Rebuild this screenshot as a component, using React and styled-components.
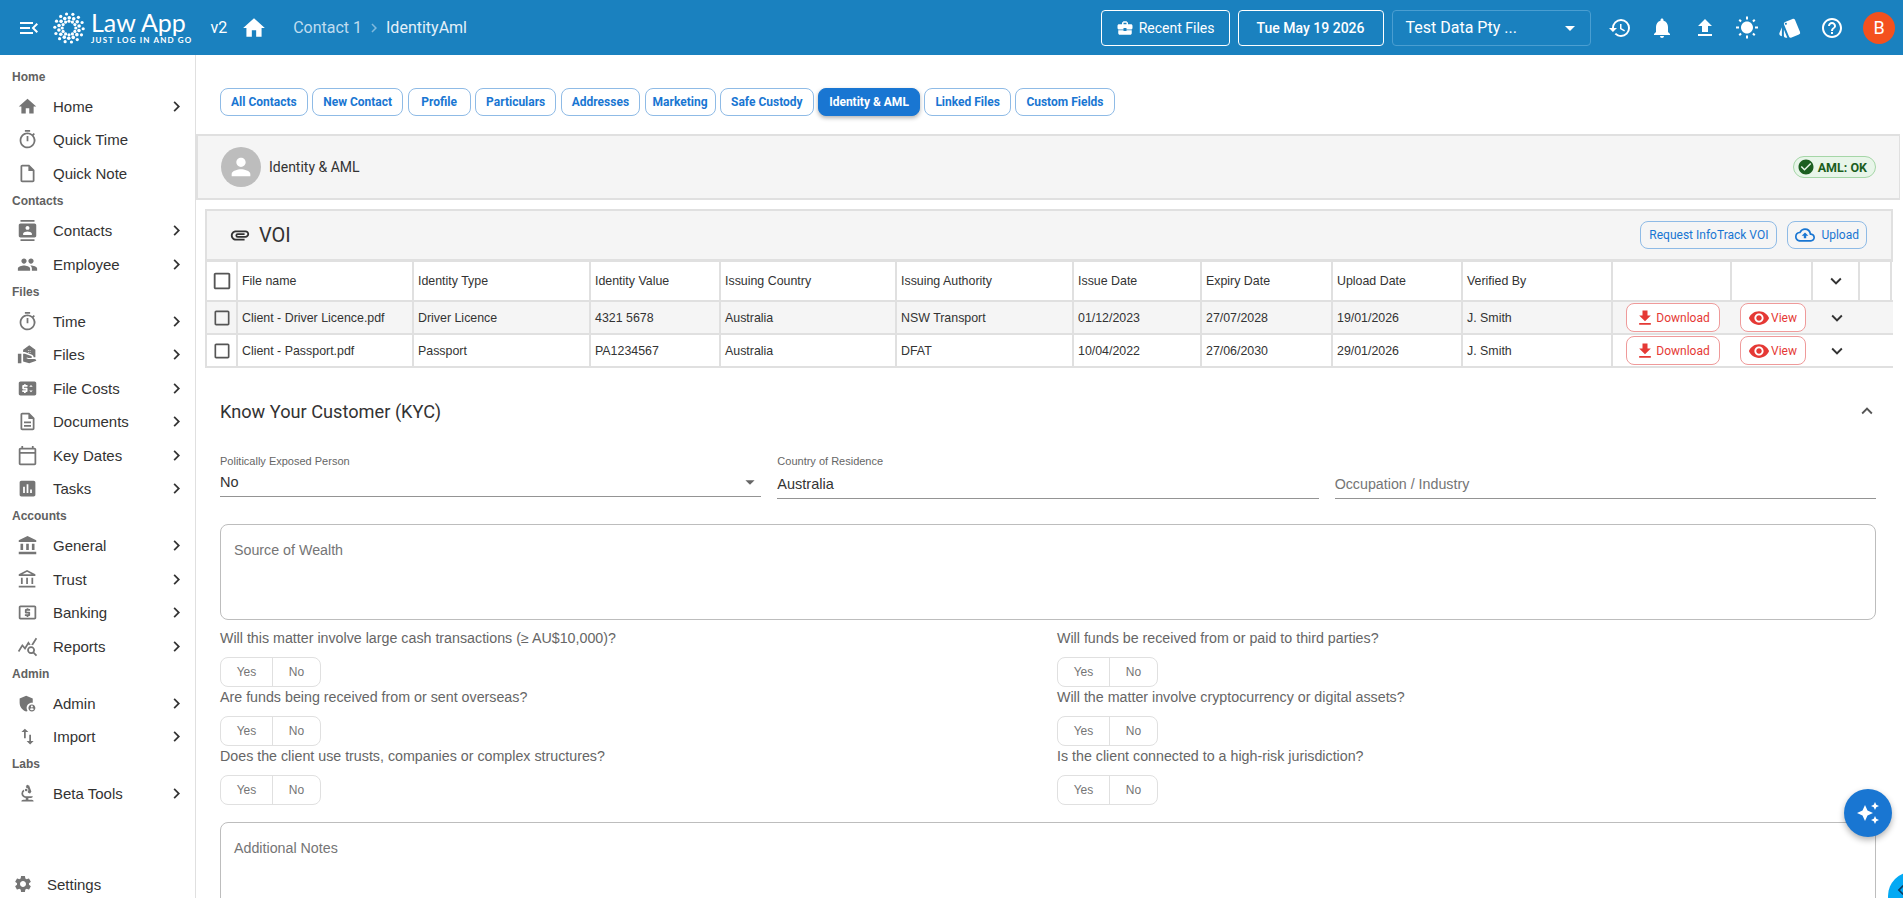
import styled, { createGlobalStyle } from 'styled-components';
import {
    MdMenuOpen, MdHome, MdOutlineTimer, MdOutlineInsertDriveFile, MdContacts, MdPeople,
    MdRealEstateAgent, MdPriceChange, MdOutlineDescription, MdOutlineCalendarToday, MdAssessment,
    MdAccountBalance, MdOutlineAccountBalance, MdOutlineLocalAtm, MdOutlineQueryStats,
    MdAdminPanelSettings, MdImportExport, MdBiotech, MdSettings, MdChevronRight, MdBusinessCenter,
    MdArrowDropDown, MdHistory, MdNotifications, MdFileUpload, MdWbSunny, MdStyle, MdHelpOutline,
    MdPerson, MdCheckCircle, MdAttachment, MdOutlineCloudUpload, MdCheckBoxOutlineBlank,
    MdFileDownload, MdVisibility, MdKeyboardArrowDown, MdKeyboardArrowUp, MdAutoAwesome, MdCode,
} from 'react-icons/md';

const GlobalStyle = createGlobalStyle`
    html, body {
        margin: 0;
        height: 100%;
        overflow: hidden;
        background: #fff;
        font-family: Roboto, "Liberation Sans", sans-serif;
    }
    * {
        box-sizing: border-box;
    }
`;

const Page = styled.div`
    height: 100vh;
    display: flex;
    flex-direction: column;
    overflow: hidden;
    position: relative;
`;

const Header = styled.header`
    height: 55px;
    flex: none;
    background: #1a81bf;
    color: #fff;
    display: flex;
    align-items: center;
    padding: 0 8px 0 17px;
    svg {
        flex: none;
    }
`;

const LogoWrap = styled.div`
    display: flex;
    align-items: center;
    gap: 6px;
    margin-left: 12px;
`;

const LogoText = styled.div`
    display: flex;
    flex-direction: column;
`;

const LogoName = styled.span`
    font-family: Lato, sans-serif;
    font-size: 25px;
    line-height: 25px;
`;

const LogoTag = styled.span`
    font-family: Lato, sans-serif;
    font-size: 8px;
    line-height: 10px;
    font-weight: 700;
    letter-spacing: 1.15px;
    white-space: nowrap;
`;

const Version = styled.span`
    font-size: 16px;
    margin-left: 18px;
    margin-right: 14px;
`;

const Crumbs = styled.div`
    display: flex;
    align-items: center;
    font-size: 16px;
    margin-left: 26px;
    color: #bfdcef;
    gap: 3px;
    b {
        font-weight: 400;
        color: #e3f0f9;
    }
`;

const HeaderRight = styled.div`
    margin-left: auto;
    display: flex;
    align-items: center;
`;

const HeadButton = styled.div`
    height: 36px;
    padding: 0 ${p => p.$pad}px;
    border: 1px solid #fff;
    border-radius: 4px;
    display: flex;
    align-items: center;
    gap: 5px;
    font-size: 14px;
    font-weight: ${p => p.$bold ? 500 : 400};
    margin-right: 8px;
`;

const CompanySelect = styled.div`
    width: 199px;
    height: 36px;
    padding: 0 8px 0 13px;
    border: 1px solid #4a9ed1;
    border-radius: 4px;
    display: flex;
    align-items: center;
    justify-content: space-between;
    font-size: 16px;
    margin-right: 17px;
`;

const HeadIcons = styled.div`
    display: flex;
    align-items: center;
    gap: 18.5px;
    margin-right: 19px;
`;

const Avatar = styled.div`
    width: 32px;
    height: 32px;
    border-radius: 50%;
    background: #f4511e;
    display: flex;
    align-items: center;
    justify-content: center;
    font-size: 18px;
`;

const Body = styled.div`
    flex: 1;
    display: flex;
    min-height: 0;
`;

const Sidebar = styled.nav`
    width: 196px;
    flex: none;
    border-right: 1px solid #e0e0e0;
    padding-top: 11px;
    display: flex;
    flex-direction: column;
    font-family: "Liberation Sans", Arial, sans-serif;
`;

const GroupLabel = styled.div`
    height: 23.8px;
    line-height: 23.8px;
    padding-left: 12px;
    font-size: 12px;
    font-weight: 700;
    color: #616161;
`;

const NavRow = styled.div`
    height: 33.45px;
    display: flex;
    align-items: center;
    padding-left: 17px;
    font-size: 15px;
    color: #333;
    svg:first-child {
        color: #757575;
        margin-right: 15px;
    }
    span {
        flex: 1;
    }
    svg:last-child {
        color: #333;
        margin-right: 8px;
    }
`;

const SettingsRow = styled.div`
    margin-top: auto;
    height: 30px;
    margin-bottom: -1px;
    display: flex;
    align-items: center;
    gap: 14px;
    padding-left: 13px;
    font-size: 15px;
    color: #333;
    svg {
        color: #757575;
    }
`;

const Main = styled.main`
    flex: 1;
    min-width: 0;
    padding-right: 3px;
`;

const Tabs = styled.div`
    display: flex;
    gap: 4.5px;
    padding: 33px 0 18px 24px;
`;

const Tab = styled.div`
    height: 28px;
    min-width: 63px;
    padding: 0 ${p => p.$tight ? 7 : 10}px;
    display: flex;
    align-items: center;
    justify-content: center;
    font-size: 12px;
    font-weight: 700;
    white-space: nowrap;
    border-radius: 8px;
    border: 1px solid ${p => p.$active ? '#1976d2' : '#8fbbe6'};
    color: ${p => p.$active ? '#fff' : '#1976d2'};
    background: ${p => p.$active ? '#1976d2' : '#fff'};
    box-shadow: ${p => p.$active ? '0 2px 4px rgba(0,0,0,.3)' : 'none'};
`;

const TitleBar = styled.div`
    height: 66px;
    background: #f5f5f5;
    border: 2px solid #e0e0e0;
    border-right-width: 1px;
    display: flex;
    align-items: center;
    padding: 0 23px 0 23px;
    font-size: 14px;
    color: #333;
`;

const PersonCircle = styled.div`
    width: 40px;
    height: 40px;
    border-radius: 50%;
    background: #bdbdbd;
    color: #fff;
    display: flex;
    align-items: center;
    justify-content: center;
    margin-right: 8px;
`;

const AmlChip = styled.div`
    margin-left: auto;
    height: 22px;
    padding: 0 8px 0 3px;
    border: 1px solid #a5d6a7;
    border-radius: 11px;
    background: #e8f5e9;
    color: #1b5e20;
    font-size: 12.5px;
    font-weight: 700;
    display: flex;
    align-items: center;
    gap: 3px;
`;

const VoiCard = styled.section`
    margin: 9px 7px 0 9px;
`;

const VoiHead = styled.div`
    height: 53px;
    background: #f5f5f5;
    border: 2px solid #e0e0e0;
    border-bottom-width: 3px;
    display: flex;
    align-items: center;
    padding: 0 24px 0 22px;
    font-size: 20px;
    color: #333;
    gap: 8px;
    svg {
        flex: none;
    }
`;

const VoiActions = styled.div`
    margin-left: auto;
    display: flex;
    gap: 10px;
`;

const OutlineButton = styled.div`
    height: 28px;
    padding: 0 ${p => p.$pad}px;
    border: 1px solid #8fbbe6;
    border-radius: 8px;
    color: #1976d2;
    font-size: 12px;
    display: flex;
    align-items: center;
    gap: 6px;
`;

const columns = '33px 176px 177px 130px 176px 177px 128px 131px 130px 150px 119px 81px 47px 32px';

const Row = styled.div`
    display: grid;
    grid-template-columns: ${columns};
    height: ${p => p.$head ? 40 : 33}px;
    background: ${p => p.$shade ? '#f5f5f5' : '#fff'};
    border-bottom: 2px solid #e0e0e0;
    font-family: "Liberation Sans", Arial, sans-serif;
    font-size: 12.4px;
    color: #333;
`;

const Cell = styled.div`
    display: flex;
    align-items: center;
    padding-left: 4px;
    border-right: 2px solid #e0e0e0;
    border-left: ${p => p.$first ? '2px solid #e0e0e0' : 'none'};
    white-space: nowrap;
    min-width: 0;
    justify-content: ${p => p.$center ? 'center' : 'flex-start'};
    ${p => p.$center ? 'padding: 0;' : ''}
    ${p => p.$plain ? 'border-right: none;' : ''}
    svg {
        flex: none;
    }
`;

const RedButton = styled.div`
    height: 29px;
    width: ${p => p.$w}px;
    border: 1px solid #ef9a9a;
    border-radius: 8px;
    color: #e53935;
    background: #fff;
    font-family: Roboto, sans-serif;
    font-size: 12px;
    display: flex;
    align-items: center;
    justify-content: center;
    gap: 1px;
`;

const CheckIcon = styled(MdCheckBoxOutlineBlank)`
    color: #555;
`;

const Kyc = styled.section`
    padding: 0 24px 0 24px;
`;

const KycHead = styled.div`
    height: 52px;
    margin-top: 17px;
    display: flex;
    align-items: center;
    justify-content: space-between;
    font-size: 18.2px;
    color: #333;
    svg {
        color: #555;
        margin-right: -2px;
    }
`;

const FieldRow = styled.div`
    display: grid;
    grid-template-columns: repeat(3, 1fr);
    gap: 16px;
    margin-top: 18px;
    font-family: "Liberation Sans", Arial, sans-serif;
`;

const Field = styled.div`
    height: ${p => p.$short ? 42 : 44}px;
    border-bottom: 1px solid #949494;
    display: flex;
    flex-direction: column;
`;

const FieldLabel = styled.label`
    font-size: 11px;
    line-height: 13px;
    color: #666;
    margin-bottom: ${p => p.$short ? 3 : 6}px;
`;

const FieldValue = styled.div`
    font-size: ${p => p.$muted ? 14.25 : 14.5}px;
    line-height: 20px;
    color: ${p => p.$muted ? '#757575' : '#333'};
    display: flex;
    align-items: center;
    justify-content: space-between;
    ${p => p.$muted ? 'margin-top: 19px;' : ''}
    svg {
        color: #666;
    }
`;

const TextBox = styled.div`
    height: ${p => p.$h}px;
    margin-top: ${p => p.$top}px;
    border: 1px solid #bdbdbd;
    border-radius: 8px;
    padding: 15px 13px;
    font-family: "Liberation Sans", Arial, sans-serif;
    font-size: 14.25px;
    line-height: 20px;
    color: #757575;
`;

const Questions = styled.div`
    display: grid;
    grid-template-columns: 1fr 1fr;
    column-gap: 18px;
    margin-top: 7.5px;
    font-family: "Liberation Sans", Arial, sans-serif;
`;

const Question = styled.div`
    height: 59px;
`;

const QuestionText = styled.div`
    font-size: 14.25px;
    line-height: 20px;
    color: #666;
    height: 29px;
`;

const Toggle = styled.div`
    display: inline-flex;
    height: 30px;
    border: 1px solid #e0e0e0;
    border-radius: 8px;
    font-size: 12px;
    color: #757575;
`;

const ToggleOption = styled.div`
    width: ${p => p.$w}px;
    display: flex;
    align-items: center;
    justify-content: center;
    & + & {
        border-left: 1px solid #e0e0e0;
    }
`;

const Fab = styled.div`
    position: absolute;
    left: 1844px;
    top: 789px;
    width: 48px;
    height: 48px;
    border-radius: 50%;
    background: #1976d2;
    color: #fff;
    display: flex;
    align-items: center;
    justify-content: center;
    box-shadow: 0 3px 6px rgba(0,0,0,.3);
`;

const HelperBubble = styled.div`
    position: absolute;
    left: 1888px;
    top: 872px;
    width: 48px;
    height: 48px;
    border-radius: 50%;
    background: #03a9f4;
    color: #0d3c61;
    padding: 8px 0 0 8px;
`;

const navGroups = [
    { label: 'Home', items: [
        { name: 'Home', icon: MdHome, more: true },
        { name: 'Quick Time', icon: MdOutlineTimer },
        { name: 'Quick Note', icon: MdOutlineInsertDriveFile },
    ] },
    { label: 'Contacts', items: [
        { name: 'Contacts', icon: MdContacts, more: true },
        { name: 'Employee', icon: MdPeople, more: true },
    ] },
    { label: 'Files', items: [
        { name: 'Time', icon: MdOutlineTimer, more: true },
        { name: 'Files', icon: MdRealEstateAgent, more: true },
        { name: 'File Costs', icon: MdPriceChange, more: true },
        { name: 'Documents', icon: MdOutlineDescription, more: true },
        { name: 'Key Dates', icon: MdOutlineCalendarToday, more: true },
        { name: 'Tasks', icon: MdAssessment, more: true },
    ] },
    { label: 'Accounts', items: [
        { name: 'General', icon: MdAccountBalance, more: true },
        { name: 'Trust', icon: MdOutlineAccountBalance, more: true },
        { name: 'Banking', icon: MdOutlineLocalAtm, more: true },
        { name: 'Reports', icon: MdOutlineQueryStats, more: true },
    ] },
    { label: 'Admin', items: [
        { name: 'Admin', icon: MdAdminPanelSettings, more: true },
        { name: 'Import', icon: MdImportExport, more: true },
    ] },
    { label: 'Labs', items: [
        { name: 'Beta Tools', icon: MdBiotech, more: true },
    ] },
];

const tabs = ['All Contacts', 'New Contact', 'Profile', 'Particulars', 'Addresses', 'Marketing', 'Safe Custody', 'Identity & AML', 'Linked Files', 'Custom Fields'];

const tableHead = ['File name', 'Identity Type', 'Identity Value', 'Issuing Country', 'Issuing Authority', 'Issue Date', 'Expiry Date', 'Upload Date', 'Verified By'];

const files = [
    ['Client - Driver Licence.pdf', 'Driver Licence', '4321 5678', 'Australia', 'NSW Transport', '01/12/2023', '27/07/2028', '19/01/2026', 'J. Smith'],
    ['Client - Passport.pdf', 'Passport', 'PA1234567', 'Australia', 'DFAT', '10/04/2022', '27/06/2030', '29/01/2026', 'J. Smith'],
];

const questions = [
    'Will this matter involve large cash transactions (≥ AU$10,000)?',
    'Will funds be received from or paid to third parties?',
    'Are funds being received from or sent overseas?',
    'Will the matter involve cryptocurrency or digital assets?',
    'Does the client use trusts, companies or complex structures?',
    'Is the client connected to a high-risk jurisdiction?',
];

// rings of dots round a hollow centre
function LogoMark() {
    const dots = [];
    [[6.8, 1.6, 12], [10.3, 1.8, 14], [14.2, 1.6, 14]].forEach(([r, size, count], ring) => {
        for (let i = 0; i < count; i++) {
            const a = (i / count) * Math.PI * 2 + ring * 0.25;
            dots.push(<circle key={ring + '-' + i} cx={16 + r * Math.cos(a)} cy={16 + r * Math.sin(a)} r={size} fill="#fff" />);
        }
    });
    return <svg width="32" height="32" viewBox="0 0 32 32">{dots}</svg>;
}

function ChevronRow({ name, icon: Icon, more }) {
    return (
        <NavRow>
            <Icon size={21} />
            <span>{name}</span>
            {more && <MdChevronRight size={21} />}
        </NavRow>
    );
}

function FileRow({ file, shade }) {
    return (
        <Row $shade={shade}>
            <Cell $first $center><CheckIcon size={20} /></Cell>
            {file.map(value => <Cell key={value + file[0]}>{value}</Cell>)}
            <Cell $center $plain>
                <RedButton $w={94}><MdFileDownload size={20} />Download</RedButton>
            </Cell>
            <Cell $center $plain>
                <RedButton $w={66}><MdVisibility size={22} />View</RedButton>
            </Cell>
            <Cell $center $plain><MdKeyboardArrowDown size={22} /></Cell>
            <Cell $plain />
        </Row>
    );
}

export default function App() {
    return (
        <Page>
            <GlobalStyle />
            <Header>
                <MdMenuOpen size={24} />
                <LogoWrap>
                    <LogoMark />
                    <LogoText>
                        <LogoName>Law App</LogoName>
                        <LogoTag>JUST LOG IN AND GO</LogoTag>
                    </LogoText>
                </LogoWrap>
                <Version>v2</Version>
                <MdHome size={26} />
                <Crumbs>
                    Contact 1
                    <MdChevronRight size={18} color="#7fb9dd" />
                    <b>IdentityAml</b>
                </Crumbs>
                <HeaderRight>
                    <HeadButton $pad={14}><MdBusinessCenter size={18} />Recent Files</HeadButton>
                    <HeadButton $pad={18} $bold>Tue May 19 2026</HeadButton>
                    <CompanySelect>
                        Test Data Pty ...
                        <MdArrowDropDown size={24} />
                    </CompanySelect>
                    <HeadIcons>
                        <MdHistory size={24} />
                        <MdNotifications size={24} />
                        <MdFileUpload size={24} />
                        <MdWbSunny size={24} />
                        <MdStyle size={24} />
                        <MdHelpOutline size={24} />
                    </HeadIcons>
                    <Avatar>B</Avatar>
                </HeaderRight>
            </Header>
            <Body>
                <Sidebar>
                    {navGroups.map(group => (
                        <div key={group.label}>
                            <GroupLabel>{group.label}</GroupLabel>
                            {group.items.map(item => <ChevronRow key={item.name} {...item} />)}
                        </div>
                    ))}
                    <SettingsRow><MdSettings size={20} />Settings</SettingsRow>
                </Sidebar>
                <Main>
                    <Tabs>
                        {tabs.map(tab => (
                            <Tab key={tab} $active={tab === 'Identity & AML'} $tight={tab === 'Marketing'}>{tab}</Tab>
                        ))}
                    </Tabs>
                    <TitleBar>
                        <PersonCircle><MdPerson size={28} /></PersonCircle>
                        Identity &amp; AML
                        <AmlChip><MdCheckCircle size={18} />AML: OK</AmlChip>
                    </TitleBar>
                    <VoiCard>
                        <VoiHead>
                            <MdAttachment size={22} />
                            VOI
                            <VoiActions>
                                <OutlineButton $pad={8}>Request InfoTrack VOI</OutlineButton>
                                <OutlineButton $pad={7}><MdOutlineCloudUpload size={20} />Upload</OutlineButton>
                            </VoiActions>
                        </VoiHead>
                        <Row $head>
                            <Cell $first $center><CheckIcon size={22} /></Cell>
                            {tableHead.map(title => <Cell key={title}>{title}</Cell>)}
                            <Cell />
                            <Cell />
                            <Cell $center><MdKeyboardArrowDown size={22} /></Cell>
                            <Cell />
                        </Row>
                        {files.map((file, i) => <FileRow key={file[0]} file={file} shade={i === 0} />)}
                    </VoiCard>
                    <Kyc>
                        <KycHead>
                            Know Your Customer (KYC)
                            <MdKeyboardArrowUp size={22} />
                        </KycHead>
                        <FieldRow>
                            <Field $short>
                                <FieldLabel $short>Politically Exposed Person</FieldLabel>
                                <FieldValue>No<MdArrowDropDown size={22} /></FieldValue>
                            </Field>
                            <Field>
                                <FieldLabel>Country of Residence</FieldLabel>
                                <FieldValue>Australia</FieldValue>
                            </Field>
                            <Field>
                                <FieldValue $muted>Occupation / Industry</FieldValue>
                            </Field>
                        </FieldRow>
                        <TextBox $h={96} $top={25}>Source of Wealth</TextBox>
                        <Questions>
                            {questions.map(question => (
                                <Question key={question}>
                                    <QuestionText>{question}</QuestionText>
                                    <Toggle>
                                        <ToggleOption $w={51}>Yes</ToggleOption>
                                        <ToggleOption $w={48}>No</ToggleOption>
                                    </Toggle>
                                </Question>
                            ))}
                        </Questions>
                        <TextBox $h={200} $top={17}>Additional Notes</TextBox>
                    </Kyc>
                </Main>
            </Body>
            <Fab><MdAutoAwesome size={24} /></Fab>
            <HelperBubble><MdCode size={20} /></HelperBubble>
        </Page>
    );
}
